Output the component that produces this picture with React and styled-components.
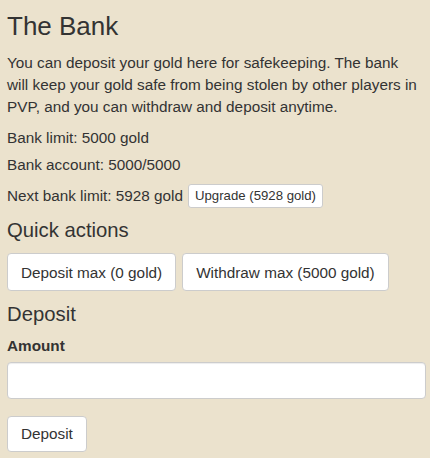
import React from "react";
import styled, { createGlobalStyle } from "styled-components";

const Global = createGlobalStyle`
  html, body { margin: 0; padding: 0; background: #ebe2cd; }
  body {
    font-family: "Liberation Sans", Arial, Helvetica, sans-serif;
    color: #333;
    font-size: 15.3px;
  }
`;

const Page = styled.div`
  padding: 0 4px 0 7px;
  width: 430px;
  box-sizing: border-box;
`;

const Title = styled.h1`
  font-size: 26px;
  font-weight: 400;
  line-height: 30px;
  margin: 11px 0 11px;
`;

const SubTitle = styled.h2`
  font-size: 20.3px;
  font-weight: 400;
  line-height: 24px;
  margin: ${(p) => p.$top}px 0 ${(p) => p.$bottom}px;
`;

const Intro = styled.p`
  margin: 0 0 9px;
  line-height: 22px;
  max-width: 414px;
`;

const Line = styled.div`
  line-height: 22px;
  margin-bottom: ${(p) => p.$gap}px;
`;

const Row = styled.div`
  display: flex;
  align-items: center;
  gap: 5px;
  height: 24px;
  line-height: 22px;
`;

const SmallButton = styled.button`
  font-family: inherit;
  font-size: 13.2px;
  color: #333;
  background: #fff;
  border: 1px solid #ccc;
  border-radius: 3px;
  height: 24px;
  padding: 0 6px;
  line-height: 22px;
`;

const Actions = styled.div`
  display: flex;
  gap: 6px;
`;

const Button = styled.button`
  font-family: inherit;
  font-size: 15.3px;
  color: #333;
  background: #fff;
  border: 1px solid #ccc;
  border-radius: 4px;
  padding: ${(p) => (p.$compact ? "6px 13px 7px" : "8px 13px 7px")};
  line-height: 21px;
`;

const Label = styled.label`
  display: block;
  font-weight: 700;
  font-size: 15.3px;
  line-height: 20px;
  margin-bottom: 6px;
`;

const Input = styled.input`
  display: block;
  width: 100%;
  box-sizing: border-box;
  height: 37px;
  border: 1px solid #ccc;
  border-radius: 4px;
  background: #fff;
  box-shadow: inset 0 1px 1px rgba(0, 0, 0, 0.075);
  font-family: inherit;
  font-size: 15px;
  padding: 6px 12px;
  margin-bottom: 17px;
`;

export default function App() {
  return (
    <>
      <Global />
      <Page>
        <Title>The Bank</Title>
        <Intro>
          You can deposit your gold here for safekeeping. The bank will keep
          your gold safe from being stolen by other players in PVP, and you can
          withdraw and deposit anytime.
        </Intro>
        <Line $gap={5}>Bank limit: 5000 gold</Line>
        <Line $gap={8}>Bank account: 5000/5000</Line>
        <Row>
          <span>Next bank limit: 5928 gold</span>
          <SmallButton>Upgrade (5928 gold)</SmallButton>
        </Row>
        <SubTitle $top={10} $bottom={11}>Quick actions</SubTitle>
        <Actions>
          <Button>Deposit max (0 gold)</Button>
          <Button>Withdraw max (5000 gold)</Button>
        </Actions>
        <SubTitle $top={11} $bottom={10}>Deposit</SubTitle>
        <Label>Amount</Label>
        <Input type="text" />
        <Button $compact>Deposit</Button>
      </Page>
    </>
  );
}
